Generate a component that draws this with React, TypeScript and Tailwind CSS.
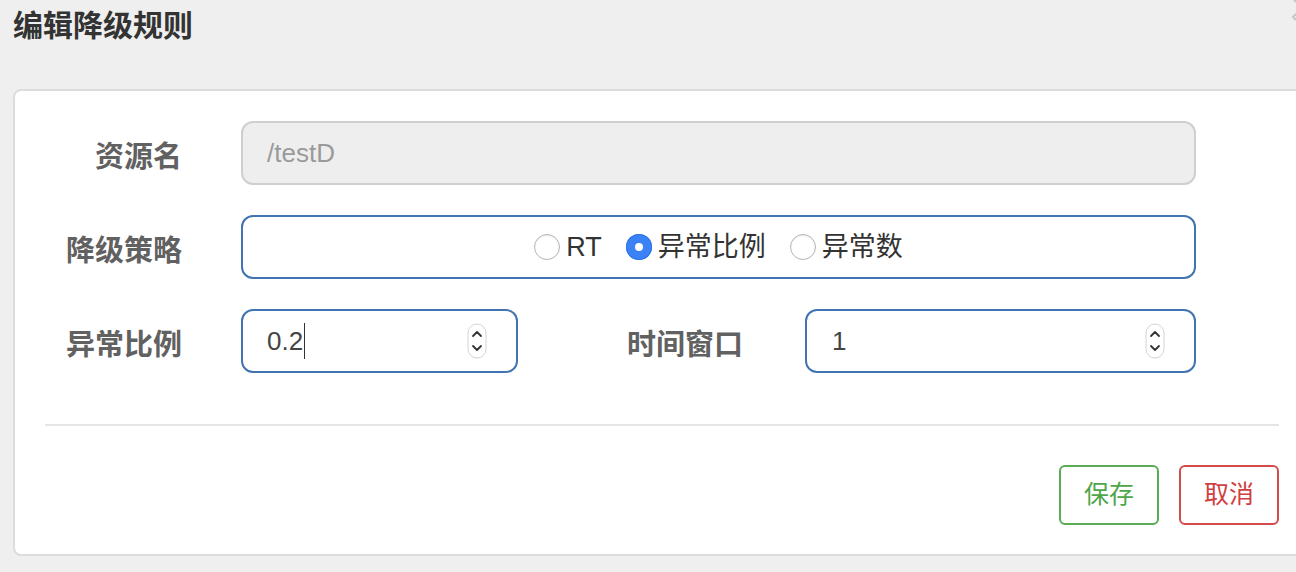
import React from "react";

const FONT = { fontFamily: '"Liberation Sans", "Noto Sans CJK SC", sans-serif' };

function Spinner() {
  return (
    <svg width="20" height="36" viewBox="0 0 20 36" className="shrink-0">
      <rect x="1" y="1" width="18" height="34" rx="9" fill="#fff" stroke="#d4d4d4" strokeWidth="1" />
      <path d="M6 13 L10 9 L14 13" fill="none" stroke="#333" strokeWidth="1.8" strokeLinecap="round" strokeLinejoin="round" />
      <path d="M6 23 L10 27 L14 23" fill="none" stroke="#333" strokeWidth="1.8" strokeLinecap="round" strokeLinejoin="round" />
    </svg>
  );
}

function Radio({ checked, label }: { checked?: boolean; label: string }) {
  return (
    <div className="flex items-center gap-[6px]">
      {checked ? (
        <span className="w-[26px] h-[26px] rounded-full bg-[#3b82f6] flex items-center justify-center shadow-[inset_0_0_0_1px_#2f74e6]">
          <span className="w-[8px] h-[8px] rounded-full bg-white" />
        </span>
      ) : (
        <span className="w-[26px] h-[26px] rounded-full bg-white border border-[#b5b5b5] shadow-[inset_0_1px_2px_rgba(0,0,0,0.08)]" />
      )}
      <span className="text-[27px] text-[#333] leading-none">{label}</span>
    </div>
  );
}

export default function App() {
  return (
    <div className="relative w-[1296px] h-[572px] bg-[#efefef] overflow-hidden" style={FONT}>
      <svg className="absolute left-[1290px] top-0" width="6" height="24" viewBox="0 0 6 24">
        <path d="M4 0 L6 2" stroke="#c4c4c4" strokeWidth="2" />
        <path d="M6 14 L3 17 L6 20" fill="none" stroke="#c4c4c4" strokeWidth="2" />
      </svg>
      <div className="pl-[13px] pt-[6px] h-[89px]">
        <h1 className="text-[30px] font-bold text-[#333] leading-[40px]">编辑降级规则</h1>
      </div>
      <div className="ml-[13px] w-[1298px] bg-white border-2 border-[#dcdcdc] rounded-[8px] pt-[30px] pb-[29px]">
        <div className="flex flex-col gap-[30px]">
          <div className="flex items-center">
            <div className="w-[167px] text-right text-[29px] font-bold text-[#616161] mt-[10px]">资源名</div>
            <div className="ml-[59px] w-[955px] h-[64px] rounded-[12px] border-2 border-[#cfcfcf] bg-[#eeeeee] flex items-center pl-[24px] text-[26px] text-[#9a9a9a]">
              /testD
            </div>
          </div>
          <div className="flex items-center">
            <div className="w-[167px] text-right text-[29px] font-bold text-[#616161] mt-[10px]">降级策略</div>
            <div className="ml-[59px] w-[955px] h-[64px] rounded-[12px] border-2 border-[#4174b0] flex items-center justify-center gap-[24px]">
              <Radio label="RT" />
              <Radio checked label="异常比例" />
              <Radio label="异常数" />
            </div>
          </div>
          <div className="flex items-center">
            <div className="w-[167px] text-right text-[29px] font-bold text-[#616161] mt-[10px]">异常比例</div>
            <div className="ml-[59px] w-[277px] h-[64px] rounded-[12px] border-2 border-[#4174b0] flex items-center pl-[24px] pr-[29px]">
              <span className="text-[26px] text-[#444]">0.2</span>
              <span className="w-px h-[36px] bg-[#333] ml-[1px]" />
              <span className="flex-1" />
              <Spinner />
            </div>
            <div className="w-[225px] text-right text-[29px] font-bold text-[#616161] mt-[10px]">时间窗口</div>
            <div className="ml-[62px] w-[391px] h-[64px] rounded-[12px] border-2 border-[#4174b0] flex items-center pl-[25px] pr-[29px]">
              <span className="text-[26px] text-[#444]">1</span>
              <span className="flex-1" />
              <Spinner />
            </div>
          </div>
        </div>
        <div className="mx-[30px] mt-[51px] h-[2px] bg-[#e5e5e5]" />
        <div className="flex justify-end gap-[20px] pr-[30px] mt-[39px]">
          <button className="w-[100px] h-[60px] rounded-[6px] border-2 border-[#5aab55] text-[#4ea64a] text-[25px] bg-white">保存</button>
          <button className="w-[100px] h-[60px] rounded-[6px] border-2 border-[#d24c4c] text-[#cf4040] text-[25px] bg-white">取消</button>
        </div>
      </div>
    </div>
  );
}
